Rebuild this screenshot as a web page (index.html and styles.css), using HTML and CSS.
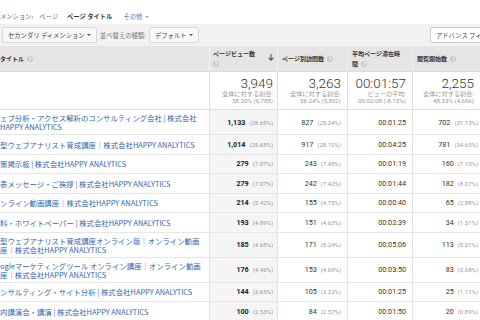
FILE: index.html
```html
<!DOCTYPE html>
<html lang="ja">
<head>
    <meta charset="UTF-8">
    <meta name="viewport" content="width=device-width, initial-scale=1.0">
    <title>ページ タイトル</title>
    <link rel="stylesheet" href="styles.css">
</head>
<body>
<div class="page">
    <div class="dims">
        <span class="dims-label">メンション:</span>
        <a class="dim-link">ページ</a>
        <span class="dim-current">ページ タイトル</span>
        <a class="dim-link">その他 <span class="caret light"></span></a>
    </div>

    <div class="toolbar">
        <button class="btn btn-secondary">セカンダリ ディメンション <span class="caret"></span></button>
        <span class="sort-label">並べ替えの種類:</span>
        <button class="btn btn-sort">デフォルト <span class="caret"></span></button>
        <button class="btn btn-advanced">アドバンス フィルタ</button>
    </div>

    <div class="report">
        <div class="row head">
            <div class="cell title">タイトル <span class="help">?</span></div>
            <div class="cell c2">
                <div class="head-text">ページビュー数<br><span class="help">?</span></div>
                <svg class="sort-arrow" width="6" height="7" viewBox="0 0 6 7"><path d="M3 0v6M0.6 3.6L3 6.2 5.4 3.6" fill="none" stroke="#555" stroke-width="1.1"/></svg>
            </div>
            <div class="cell c3"><div class="head-text">ページ別訪問数 <span class="help">?</span></div></div>
            <div class="cell c4"><div class="head-text">平均ページ滞在時<br>間 <span class="help">?</span></div></div>
            <div class="cell c5"><div class="head-text">閲覧開始数 <span class="help">?</span></div></div>
        </div>

        <div class="row summary">
            <div class="cell title"></div>
            <div class="cell c2"><div class="total"><div class="big">3,949</div><div class="sub">全体に対する割合:<br>58.20% (6,785)</div></div></div>
            <div class="cell c3"><div class="total"><div class="big">3,263</div><div class="sub">全体に対する割合:<br>56.24% (5,802)</div></div></div>
            <div class="cell c4"><div class="total"><div class="big">00:01:57</div><div class="sub">ビューの平均:<br>00:02:08 (-8.15%)</div></div></div>
            <div class="cell c5"><div class="total"><div class="big">2,255</div><div class="sub">全体に対する割合:<br>48.33% (4,666)</div></div></div>
        </div>

        <div class="row data">
            <div class="cell title"><a>ェブ分析・アクセス解析のコンサルティング会社 | 株式会社<br>HAPPY ANALYTICS</a></div>
            <div class="cell c2"><b>1,133</b><i>(28.69%)</i></div>
            <div class="cell c3"><b>827</b><i>(25.34%)</i></div>
            <div class="cell c4"><b>00:01:25</b></div>
            <div class="cell c5"><b>702</b><i>(31.13%)</i></div>
        </div>
        <div class="row data">
            <div class="cell title"><a>型ウェブアナリスト育成講座｜株式会社HAPPY ANALYTICS</a></div>
            <div class="cell c2"><b>1,014</b><i>(25.68%)</i></div>
            <div class="cell c3"><b>917</b><i>(28.10%)</i></div>
            <div class="cell c4"><b>00:04:25</b></div>
            <div class="cell c5"><b>781</b><i>(34.63%)</i></div>
        </div>
        <div class="row data">
            <div class="cell title"><a>策掲示板 | 株式会社HAPPY ANALYTICS</a></div>
            <div class="cell c2"><b>279</b><i>(7.07%)</i></div>
            <div class="cell c3"><b>243</b><i>(7.45%)</i></div>
            <div class="cell c4"><b>00:01:19</b></div>
            <div class="cell c5"><b>160</b><i>(7.10%)</i></div>
        </div>
        <div class="row data">
            <div class="cell title"><a>表メッセージ・ご挨拶 | 株式会社HAPPY ANALYTICS</a></div>
            <div class="cell c2"><b>279</b><i>(7.07%)</i></div>
            <div class="cell c3"><b>242</b><i>(7.42%)</i></div>
            <div class="cell c4"><b>00:01:44</b></div>
            <div class="cell c5"><b>182</b><i>(8.07%)</i></div>
        </div>
        <div class="row data">
            <div class="cell title"><a>ンライン動画講座｜株式会社HAPPY ANALYTICS</a></div>
            <div class="cell c2"><b>214</b><i>(5.42%)</i></div>
            <div class="cell c3"><b>155</b><i>(4.75%)</i></div>
            <div class="cell c4"><b>00:00:40</b></div>
            <div class="cell c5"><b>65</b><i>(2.88%)</i></div>
        </div>
        <div class="row data">
            <div class="cell title"><a>料・ホワイトペーパー | 株式会社HAPPY ANALYTICS</a></div>
            <div class="cell c2"><b>193</b><i>(4.89%)</i></div>
            <div class="cell c3"><b>151</b><i>(4.63%)</i></div>
            <div class="cell c4"><b>00:02:39</b></div>
            <div class="cell c5"><b>34</b><i>(1.51%)</i></div>
        </div>
        <div class="row data">
            <div class="cell title"><a>型ウェブアナリスト育成講座オンライン版｜オンライン動画<br>座｜株式会社HAPPY ANALYTICS</a></div>
            <div class="cell c2"><b>185</b><i>(4.68%)</i></div>
            <div class="cell c3"><b>171</b><i>(5.24%)</i></div>
            <div class="cell c4"><b>00:05:06</b></div>
            <div class="cell c5"><b>113</b><i>(5.01%)</i></div>
        </div>
        <div class="row data">
            <div class="cell title"><a>ogleマーケティングツール オンライン講座｜オンライン動画<br>座｜株式会社HAPPY ANALYTICS</a></div>
            <div class="cell c2"><b>176</b><i>(4.46%)</i></div>
            <div class="cell c3"><b>153</b><i>(4.69%)</i></div>
            <div class="cell c4"><b>00:03:50</b></div>
            <div class="cell c5"><b>83</b><i>(3.68%)</i></div>
        </div>
        <div class="row data">
            <div class="cell title"><a>ンサルティング・サイト分析 | 株式会社HAPPY ANALYTICS</a></div>
            <div class="cell c2"><b>144</b><i>(3.65%)</i></div>
            <div class="cell c3"><b>105</b><i>(3.22%)</i></div>
            <div class="cell c4"><b>00:01:25</b></div>
            <div class="cell c5"><b>25</b><i>(1.11%)</i></div>
        </div>
        <div class="row data">
            <div class="cell title"><a>内講演会・講演 | 株式会社HAPPY ANALYTICS</a></div>
            <div class="cell c2"><b>100</b><i>(2.53%)</i></div>
            <div class="cell c3"><b>84</b><i>(2.57%)</i></div>
            <div class="cell c4"><b>00:01:50</b></div>
            <div class="cell c5"><b>20</b><i>(0.89%)</i></div>
        </div>
    </div>
</div>
</body>
</html>
```

FILE: styles.css
```css
body {
    margin: 0;
    font-family: Roboto, "Noto Sans CJK JP", sans-serif;
    color: #333;
    background: #fff;
    overflow: hidden;
}
.page {
    width: 500px;
}

/* primary dimension line */
.dims {
    height: 24px;
    box-sizing: border-box;
    display: flex;
    align-items: flex-end;
    padding-bottom: 2px;
    font-family: "Noto Sans CJK JP", sans-serif;
    font-size: 6.3px;
    line-height: 10px;
}
.dims-label {
    color: #666;
    margin-right: 6px;
}
.dim-link {
    color: #4a7bc8;
    margin-right: 9px;
    display: flex;
    align-items: center;
    gap: 3px;
}
.dim-current {
    font-weight: bold;
    color: #333;
    margin-right: 11px;
}

.caret {
    display: inline-block;
    width: 0;
    height: 0;
    border-left: 2px solid transparent;
    border-right: 2px solid transparent;
    border-top: 2.5px solid #555;
}
.caret.light {
    border-top-color: #9aa7bb;
}

/* toolbar */
.toolbar {
    height: 22px;
    background: #f2f2f2;
    display: flex;
    align-items: center;
    padding-left: 2px;
}
.btn {
    height: 16px;
    box-sizing: border-box;
    display: flex;
    align-items: center;
    justify-content: space-between;
    padding: 0 5px;
    border: 1px solid #d9d9d9;
    border-radius: 2px;
    background: #f8f8f8;
    font-family: "Noto Sans CJK JP", sans-serif;
    font-size: 6.3px;
    color: #444;
    white-space: nowrap;
}
.btn-secondary {
    width: 95px;
}
.sort-label {
    margin-left: 3px;
    width: 47px;
    font-family: "Noto Sans CJK JP", sans-serif;
    font-size: 6.3px;
    color: #777;
}
.btn-sort {
    width: 50px;
    margin-left: 2px;
}
.btn-advanced {
    margin-left: auto;
    width: 70px;
    justify-content: flex-start;
    background: #fff;
    border-color: #ccc;
}

/* report table */
.report {
    width: 484px;
}
.row {
    display: grid;
    grid-template-columns: 209px 68px 70px 65px 72px;
    border-bottom: 1px solid #e6e6e6;
    box-sizing: border-box;
}
.cell {
    display: flex;
    align-items: center;
    justify-content: flex-end;
    padding: 0 6px 0 4px;
    border-left: 1px solid #e2e2e2;
}
.cell.title {
    border-left: none;
    justify-content: flex-start;
    padding: 0;
}
.cell.c2 {
    padding-right: 4px;
}

.head {
    height: 26px;
    background: #e5e5e5;
    border-bottom-color: #dcdcdc;
    font-family: "Noto Sans CJK JP", sans-serif;
    font-size: 6px;
    font-weight: bold;
    line-height: 10px;
    color: #333;
}
.head .cell {
    border-left-color: #f3f3f3;
    justify-content: flex-start;
}
.head .cell.title {
    gap: 3px;
}
.head .c2 {
    justify-content: space-between;
    padding-left: 3px;
    padding-right: 3px;
}
.sort-arrow {
    display: block;
    margin-bottom: 2px;
}
.help {
    display: inline-block;
    width: 6px;
    height: 6px;
    border-radius: 50%;
    background: #c8c8c8;
    color: #fff;
    font-family: Roboto, sans-serif;
    font-size: 5px;
    line-height: 6px;
    text-align: center;
    vertical-align: middle;
    margin-left: 2px;
}
.cell.title > .help,
.c2 .help {
    margin-left: 0;
}

.summary {
    height: 38px;
    border-bottom-color: #dedede;
}
.summary .cell {
    border-left-color: #dedede;
}
.summary .c5 {
    padding-right: 10px;
}
.total {
    text-align: right;
}
.big {
    font-size: 13.5px;
    font-weight: 300;
    line-height: 13px;
    color: #333;
}
.sub {
    margin-top: 1px;
    font-family: Roboto, "Noto Sans CJK JP", sans-serif;
    font-size: 6.2px;
    line-height: 6.5px;
    color: #999;
}

.data {
    min-height: 19.5px;
}
.data .cell.title {
    padding: 3px 0;
    white-space: nowrap;
    overflow: hidden;
}
.data .cell.title a {
    font-family: "Noto Sans CJK JP", sans-serif;
    font-size: 7.4px;
    line-height: 9px;
    color: #2f66b0;
}
.data .c2 {
    background: #f5f5f5;
}
.data b {
    font-size: 7.2px;
    font-weight: normal;
    color: #333;
}
.data .c2 b {
    font-weight: bold;
    color: #222;
}
.data i {
    font-style: normal;
    font-size: 6px;
    color: #999;
    margin-left: 4px;
}
```
